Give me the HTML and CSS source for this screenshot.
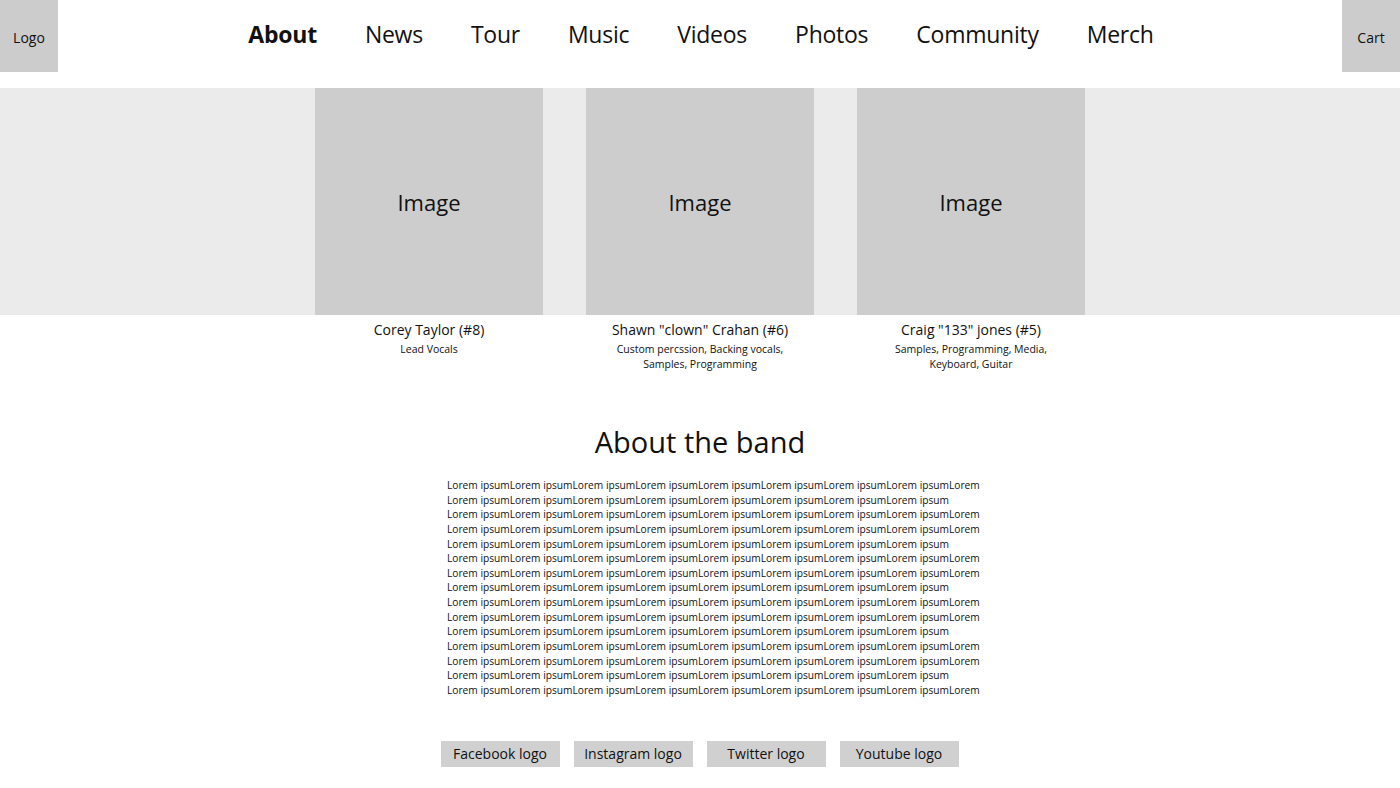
FILE: index.html
```html
<!DOCTYPE html>
<html lang="en">
<head>
  <meta charset="UTF-8" />
  <meta name="viewport" content="width=device-width, initial-scale=1.0"/>
  <title>Band - About</title>
  <link rel="stylesheet" href="styles.css">
</head>
<body>

  <header class="top-bar">
    <div class="corner-box">Logo</div>
    <nav class="main-nav">
      <a href="#" class="active">About</a>
      <a href="#">News</a>
      <a href="#">Tour</a>
      <a href="#">Music</a>
      <a href="#">Videos</a>
      <a href="#">Photos</a>
      <a href="#">Community</a>
      <a href="#">Merch</a>
    </nav>
    <div class="corner-box">Cart</div>
  </header>

  <section class="members">
    <div class="member">
      <div class="member-img">Image</div>
      <div class="member-name">Corey Taylor (#8)</div>
      <div class="member-role">Lead Vocals</div>
    </div>
    <div class="member">
      <div class="member-img">Image</div>
      <div class="member-name">Shawn "clown" Crahan (#6)</div>
      <div class="member-role">Custom percssion, Backing vocals,<br>Samples, Programming</div>
    </div>
    <div class="member">
      <div class="member-img">Image</div>
      <div class="member-name">Craig "133" jones (#5)</div>
      <div class="member-role">Samples, Programming, Media,<br>Keyboard, Guitar</div>
    </div>
  </section>

  <section class="about">
    <h1>About the band</h1>
    <p class="about-text">
      Lorem ipsumLorem ipsumLorem ipsumLorem ipsumLorem ipsumLorem ipsumLorem ipsumLorem ipsumLorem<br>
      Lorem ipsumLorem ipsumLorem ipsumLorem ipsumLorem ipsumLorem ipsumLorem ipsumLorem ipsum<br>
      Lorem ipsumLorem ipsumLorem ipsumLorem ipsumLorem ipsumLorem ipsumLorem ipsumLorem ipsumLorem<br>
      Lorem ipsumLorem ipsumLorem ipsumLorem ipsumLorem ipsumLorem ipsumLorem ipsumLorem ipsumLorem<br>
      Lorem ipsumLorem ipsumLorem ipsumLorem ipsumLorem ipsumLorem ipsumLorem ipsumLorem ipsum<br>
      Lorem ipsumLorem ipsumLorem ipsumLorem ipsumLorem ipsumLorem ipsumLorem ipsumLorem ipsumLorem<br>
      Lorem ipsumLorem ipsumLorem ipsumLorem ipsumLorem ipsumLorem ipsumLorem ipsumLorem ipsumLorem<br>
      Lorem ipsumLorem ipsumLorem ipsumLorem ipsumLorem ipsumLorem ipsumLorem ipsumLorem ipsum<br>
      Lorem ipsumLorem ipsumLorem ipsumLorem ipsumLorem ipsumLorem ipsumLorem ipsumLorem ipsumLorem<br>
      Lorem ipsumLorem ipsumLorem ipsumLorem ipsumLorem ipsumLorem ipsumLorem ipsumLorem ipsumLorem<br>
      Lorem ipsumLorem ipsumLorem ipsumLorem ipsumLorem ipsumLorem ipsumLorem ipsumLorem ipsum<br>
      Lorem ipsumLorem ipsumLorem ipsumLorem ipsumLorem ipsumLorem ipsumLorem ipsumLorem ipsumLorem<br>
      Lorem ipsumLorem ipsumLorem ipsumLorem ipsumLorem ipsumLorem ipsumLorem ipsumLorem ipsumLorem<br>
      Lorem ipsumLorem ipsumLorem ipsumLorem ipsumLorem ipsumLorem ipsumLorem ipsumLorem ipsum<br>
      Lorem ipsumLorem ipsumLorem ipsumLorem ipsumLorem ipsumLorem ipsumLorem ipsumLorem ipsumLorem
    </p>
  </section>

  <footer class="socials">
    <a href="#" class="social-btn">Facebook logo</a>
    <a href="#" class="social-btn">Instagram logo</a>
    <a href="#" class="social-btn">Twitter logo</a>
    <a href="#" class="social-btn">Youtube logo</a>
  </footer>

</body>
</html>
```

FILE: styles.css
```css
body {
  margin: 0;
  font-family: "Open Sans", "Noto Sans", sans-serif;
  color: #111;
  background: #fff;
}

a {
  color: inherit;
  text-decoration: none;
}

.top-bar {
  display: flex;
  justify-content: space-between;
  align-items: flex-start;
  height: 88px;
}

.corner-box {
  width: 58px;
  height: 72px;
  background: #cccccc;
  display: flex;
  align-items: center;
  justify-content: center;
  font-size: 14px;
  padding-top: 2px;
  box-sizing: border-box;
}

.main-nav {
  display: flex;
  gap: 48px;
  height: 68px;
  align-items: center;
  font-size: 23px;
  letter-spacing: -0.25px;
  padding-left: 2px;
}

.main-nav .active {
  font-weight: 700;
}

.members {
  display: flex;
  justify-content: center;
  gap: 43px;
  background: linear-gradient(#ebebeb, #ebebeb) top / 100% 227px no-repeat;
}

.member {
  width: 228px;
  text-align: center;
}

.member-img {
  height: 227px;
  background: #cdcdcd;
  display: flex;
  align-items: center;
  justify-content: center;
  font-size: 22px;
}

.member-name {
  margin-top: 5px;
  font-size: 14px;
  line-height: 20px;
}

.member-role {
  margin-top: 2px;
  font-size: 10.5px;
  line-height: 14.5px;
}

.about {
  text-align: center;
  margin-top: 51px;
}

.about h1 {
  margin: 0;
  font-size: 29px;
  font-weight: 400;
  line-height: 40px;
}

.about-text {
  margin: 16px 0 0 calc(50% - 253px);
  width: 533px;
  text-align: left;
  font-size: 10.2px;
  line-height: 14.64px;
  white-space: nowrap;
}

.socials {
  display: flex;
  justify-content: center;
  gap: 14px;
  margin-top: 43px;
  padding-right: 1px;
}

.social-btn {
  width: 119px;
  height: 26px;
  background: #d0d0d0;
  display: flex;
  align-items: center;
  justify-content: center;
  font-size: 14px;
}
```
